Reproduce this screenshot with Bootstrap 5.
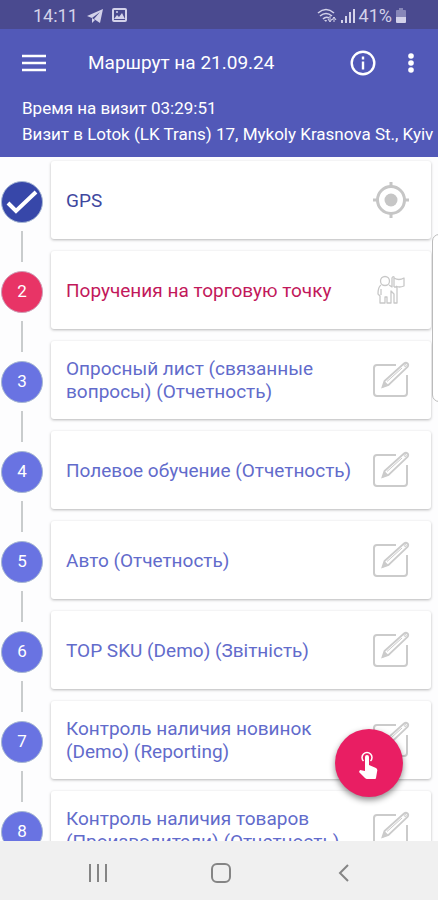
<!DOCTYPE html>
<html lang="ru">
<head>
<meta charset="utf-8">
<meta name="viewport" content="width=device-width, initial-scale=1">
<title>Маршрут на 21.09.24</title>
<link rel="stylesheet" href="https://cdn.jsdelivr.net/npm/bootstrap@5.3.0/dist/css/bootstrap.min.css">
<style>
body { font-family: Roboto, "Noto Sans", sans-serif; background: #fdfdfe; }
.status-bar { background: #4a4a8f; color: #d3d2ea; height: 29px; padding: 2px 32px 0 33px; font-size: 18px; }
.app-head { background: #5259b8; color: #fff; padding-bottom: 10px; }
.tool-row { height: 68px; padding: 0 16px 0 22px; }
.page-title { font-size: 19px; line-height: 24px; padding-left: 42px; }
.bar-btn { color: #fff; background: none; border: 0; padding: 0; line-height: 0; }
.visit-info { font-size: 17px; line-height: 26px; padding-left: 22px; margin-top: -2px; }
.step-list { padding-top: 4px; }
.step { height: 90px; padding-right: 7px; }
.rail { width: 44px; margin-right: 7px; }
.rail-line { width: 2px; background: #c9cccd; }
.rail-line.above { height: 11px; margin-bottom: 9px; }
.rail-line.below { margin-top: 8px; }
.step:first-child .above { visibility: hidden; }
.dot { width: 42px; height: 42px; background: #6973e2; color: #fff; border: 1px solid #a5b6d3; font-size: 17px; }
.dot-done { background: #3747a9; }
.dot-now { background: #e83466; border-color: #cf9db5; }
.step-card { height: 78px; background: #fff; border: 0; border-radius: 3px; box-shadow: 0 1px 3px rgba(0,0,0,.28); padding: 0 21px 0 15px; }
.step-link { color: #626bcb; font-size: 19px; line-height: 23px; text-decoration: none; }
.link-done { color: #3f489f; }
.link-now { color: #c2185b; }
.drawer-tab { top: 234px; right: -8px; width: 14px; height: 168px; background: #fff; border: 1px solid #bbb; border-radius: 8px; }
.fab { right: 35px; bottom: 103px; width: 68px; height: 68px; background: #e91e63; border: 0; padding: 0; box-shadow: 0 3px 6px rgba(0,0,0,.45); }
.sys-nav { height: 59px; background: #f0f0f0; padding: 4px 33px 0 36px; }
.sys-nav button { background: none; border: 0; padding: 0; color: #858585; }
</style>
<script src="https://cdn.jsdelivr.net/npm/bootstrap@5.3.0/dist/js/bootstrap.bundle.min.js"></script>
</head>
<body>
<svg class="d-none" aria-hidden="true">
  <symbol id="edit" viewBox="0 0 38 38">
    <g fill="none" stroke="#cbcbcb" stroke-width="2">
      <path d="M24 4H5Q2 4 2 7v25q0 3 3 3h27q3 0 3-3V14"/>
      <path d="M10.500 26l2-6L32 2.500q2-1.500 3.500 0t0 3.500L16.500 24z" stroke-width="1.800"/>
      <path d="M15 20.500L30 7" stroke-width="1"/>
      <circle cx="33.300" cy="4.500" r="1" stroke-width="1"/>
    </g>
    <path d="M10 27l2.500-7 4 4z" fill="#cbcbcb"/>
  </symbol>
</svg>
<div class="vh-100 d-flex flex-column position-relative overflow-hidden">
  <div class="status-bar d-flex align-items-center flex-shrink-0">
    <span>14:11</span>
    <svg class="ms-2" width="18" height="16" viewBox="0 0 18 16" fill="currentColor"><path d="M17 1L1 8l5 2 8-6-6 7 6 4z"/><path d="M6 10v5l3-3z"/></svg>
    <svg class="ms-2" width="15" height="15" viewBox="0 0 15 15" fill="none" stroke="currentColor" stroke-width="2"><rect x="1" y="1" width="13" height="12" rx="1"/><path d="M2 11l3-4 2 2 3-4 3 6z" fill="currentColor" stroke="none"/><circle cx="5" cy="4" r="1" fill="currentColor" stroke="none"/></svg>
    <svg class="ms-auto" width="20" height="16" viewBox="0 0 20 16" fill="none" stroke="currentColor" stroke-width="1.600"><path d="M1 5q8-7 16 0M3 8q6-5 12 0M6 11q3-3 6-1"/><path d="M7 12h3l-1 2z" fill="currentColor" stroke="none"/><path d="M13 8v5m-2-2l2 3 2-3M17 14V9m-2 3l2-3 2 3" stroke-width="1"/></svg>
    <svg class="ms-1" width="14" height="15" viewBox="0 0 14 15" stroke="currentColor" stroke-width="2"><path d="M1 15v-3M5 15V8M9 15V4M13 15V1"/></svg>
    <span class="ms-1">41%</span>
    <svg class="ms-1" width="10" height="15" viewBox="0 0 10 15" fill="currentColor"><path d="M0 3q0-1 1-1h2V0h4v2h2q1 0 1 1v6H0z" opacity=".45"/><path d="M0 9h10v5q0 1-1 1H1q-1 0-1-1z"/></svg>
  </div>

  <header class="app-head flex-shrink-0">
    <div class="tool-row d-flex align-items-center">
      <button class="bar-btn" type="button" aria-label="Меню"><svg width="24" height="18" viewBox="0 0 24 18" stroke="currentColor" stroke-width="2.6"><path d="M0 2h24M0 9h24M0 16h24"/></svg></button>
      <h1 class="page-title fw-normal mb-0 flex-grow-1 text-nowrap">Маршрут на 21.09.24</h1>
      <button class="bar-btn" type="button" aria-label="Информация"><svg width="26" height="26" viewBox="0 0 26 26" fill="none" stroke="currentColor" stroke-width="2.4"><circle cx="13" cy="13" r="11.3"/><path d="M13 11.500v8M13 6.500v3"/></svg></button>
      <button class="bar-btn ms-4 px-2" type="button" aria-label="Ещё"><svg width="6" height="20" viewBox="0 0 6 20" fill="currentColor"><circle cx="3" cy="3" r="2.800"/><circle cx="3" cy="10" r="2.800"/><circle cx="3" cy="17" r="2.800"/></svg></button>
    </div>
    <div class="visit-info text-nowrap overflow-hidden">
      <div>Время на визит 03:29:51</div>
      <div>Визит в Lotok (LK Trans) 17, Mykoly Krasnova St., Kyiv</div>
    </div>
  </header>

  <main class="flex-grow-1 overflow-hidden">
    <ol class="step-list list-unstyled mb-0">
      <li class="step d-flex">
        <div class="rail d-flex flex-column align-items-center flex-shrink-0"><span class="rail-line above"></span><span class="dot dot-done rounded-circle d-flex align-items-center justify-content-center flex-shrink-0"><svg width="34" height="28" viewBox="0 0 34 28" fill="none" stroke="#fff" stroke-width="4"><path d="M3 15l8 8L31 4"/></svg></span><span class="rail-line below flex-grow-1"></span></div>
        <div class="step-card card flex-row align-items-center flex-grow-1"><a class="step-link link-done flex-grow-1" href="#">GPS</a><svg class="flex-shrink-0" width="38" height="38" viewBox="0 0 38 38" fill="none" stroke="#c6c6c6" stroke-width="3"><circle cx="19" cy="19" r="13.500"/><circle cx="19" cy="19" r="6.500" fill="#c6c6c6" stroke="none"/><path d="M19 1v5M19 32v5M1 19h5M32 19h5"/></svg></div>
      </li>
      <li class="step d-flex">
        <div class="rail d-flex flex-column align-items-center flex-shrink-0"><span class="rail-line above"></span><span class="dot dot-now rounded-circle d-flex align-items-center justify-content-center flex-shrink-0">2</span><span class="rail-line below flex-grow-1"></span></div>
        <div class="step-card card flex-row align-items-center flex-grow-1"><a class="step-link link-now flex-grow-1" href="#">Поручения на торговую точку</a><svg class="flex-shrink-0" width="38" height="38" viewBox="0 0 38 38" fill="none" stroke="#c8c8c8" stroke-width="1.300" stroke-linejoin="round"><circle cx="13" cy="10" r="4.500"/><path d="M9 14q-3 2-3 9l2 2v7h5v-6h2v6h4V20l3 3v9h3V16M17 14l3 2V7q1-2 2-1v10"/><path d="M22 7q5 3 10 0v8q-5 2-8 0M9 24v-6M22 16h3"/></svg></div>
      </li>
      <li class="step d-flex">
        <div class="rail d-flex flex-column align-items-center flex-shrink-0"><span class="rail-line above"></span><span class="dot rounded-circle d-flex align-items-center justify-content-center flex-shrink-0">3</span><span class="rail-line below flex-grow-1"></span></div>
        <div class="step-card card flex-row align-items-center flex-grow-1"><a class="step-link flex-grow-1" href="#">Опросный лист (связанные вопросы) (Отчетность)</a><svg class="flex-shrink-0" width="38" height="38"><use href="#edit"/></svg></div>
      </li>
      <li class="step d-flex">
        <div class="rail d-flex flex-column align-items-center flex-shrink-0"><span class="rail-line above"></span><span class="dot rounded-circle d-flex align-items-center justify-content-center flex-shrink-0">4</span><span class="rail-line below flex-grow-1"></span></div>
        <div class="step-card card flex-row align-items-center flex-grow-1"><a class="step-link flex-grow-1" href="#">Полевое обучение (Отчетность)</a><svg class="flex-shrink-0" width="38" height="38"><use href="#edit"/></svg></div>
      </li>
      <li class="step d-flex">
        <div class="rail d-flex flex-column align-items-center flex-shrink-0"><span class="rail-line above"></span><span class="dot rounded-circle d-flex align-items-center justify-content-center flex-shrink-0">5</span><span class="rail-line below flex-grow-1"></span></div>
        <div class="step-card card flex-row align-items-center flex-grow-1"><a class="step-link flex-grow-1" href="#">Авто (Отчетность)</a><svg class="flex-shrink-0" width="38" height="38"><use href="#edit"/></svg></div>
      </li>
      <li class="step d-flex">
        <div class="rail d-flex flex-column align-items-center flex-shrink-0"><span class="rail-line above"></span><span class="dot rounded-circle d-flex align-items-center justify-content-center flex-shrink-0">6</span><span class="rail-line below flex-grow-1"></span></div>
        <div class="step-card card flex-row align-items-center flex-grow-1"><a class="step-link flex-grow-1" href="#">TOP SKU (Demo) (Звітність)</a><svg class="flex-shrink-0" width="38" height="38"><use href="#edit"/></svg></div>
      </li>
      <li class="step d-flex">
        <div class="rail d-flex flex-column align-items-center flex-shrink-0"><span class="rail-line above"></span><span class="dot rounded-circle d-flex align-items-center justify-content-center flex-shrink-0">7</span><span class="rail-line below flex-grow-1"></span></div>
        <div class="step-card card flex-row align-items-center flex-grow-1"><a class="step-link flex-grow-1" href="#">Контроль наличия новинок (Demo) (Reporting)</a><svg class="flex-shrink-0" width="38" height="38"><use href="#edit"/></svg></div>
      </li>
      <li class="step d-flex">
        <div class="rail d-flex flex-column align-items-center flex-shrink-0"><span class="rail-line above"></span><span class="dot rounded-circle d-flex align-items-center justify-content-center flex-shrink-0">8</span><span class="rail-line below flex-grow-1"></span></div>
        <div class="step-card card flex-row align-items-center flex-grow-1"><a class="step-link flex-grow-1" href="#">Контроль наличия товаров (Производители) (Отчетность)</a><svg class="flex-shrink-0" width="38" height="38"><use href="#edit"/></svg></div>
      </li>
    </ol>
  </main>

  <nav class="sys-nav d-flex flex-shrink-0" aria-label="Система">
    <button class="col" type="button" aria-label="Недавние"><svg width="18" height="18" viewBox="0 0 18 18" stroke="currentColor" stroke-width="2"><path d="M1 0v18M9 0v18M17 0v18"/></svg></button>
    <button class="col" type="button" aria-label="Домой"><svg width="20" height="20" viewBox="0 0 20 20" fill="none" stroke="currentColor" stroke-width="2"><rect x="1" y="1" width="18" height="18" rx="5"/></svg></button>
    <button class="col" type="button" aria-label="Назад"><svg width="12" height="20" viewBox="0 0 12 20" fill="none" stroke="currentColor" stroke-width="2"><path d="M10 2L2 10l8 8"/></svg></button>
  </nav>

  <div class="drawer-tab position-absolute"></div>
  <button class="fab position-absolute rounded-circle d-flex align-items-center justify-content-center" type="button" aria-label="Выбрать"><svg class="mt-1" width="20" height="28" viewBox="0 0 20 28" fill="#fff"><path d="M4.500 10a5 5 0 1 1 7 0" fill="none" stroke="#fff" stroke-width="1.500"/><path d="M6 6q0-2 2-2t2 2v8l7 3q2 1 1 4l-1 6q0 1-1 1H8q-1 0-2-1l-6-6 1-2 5 1z"/></svg></button>
</div>
</body>
</html>
